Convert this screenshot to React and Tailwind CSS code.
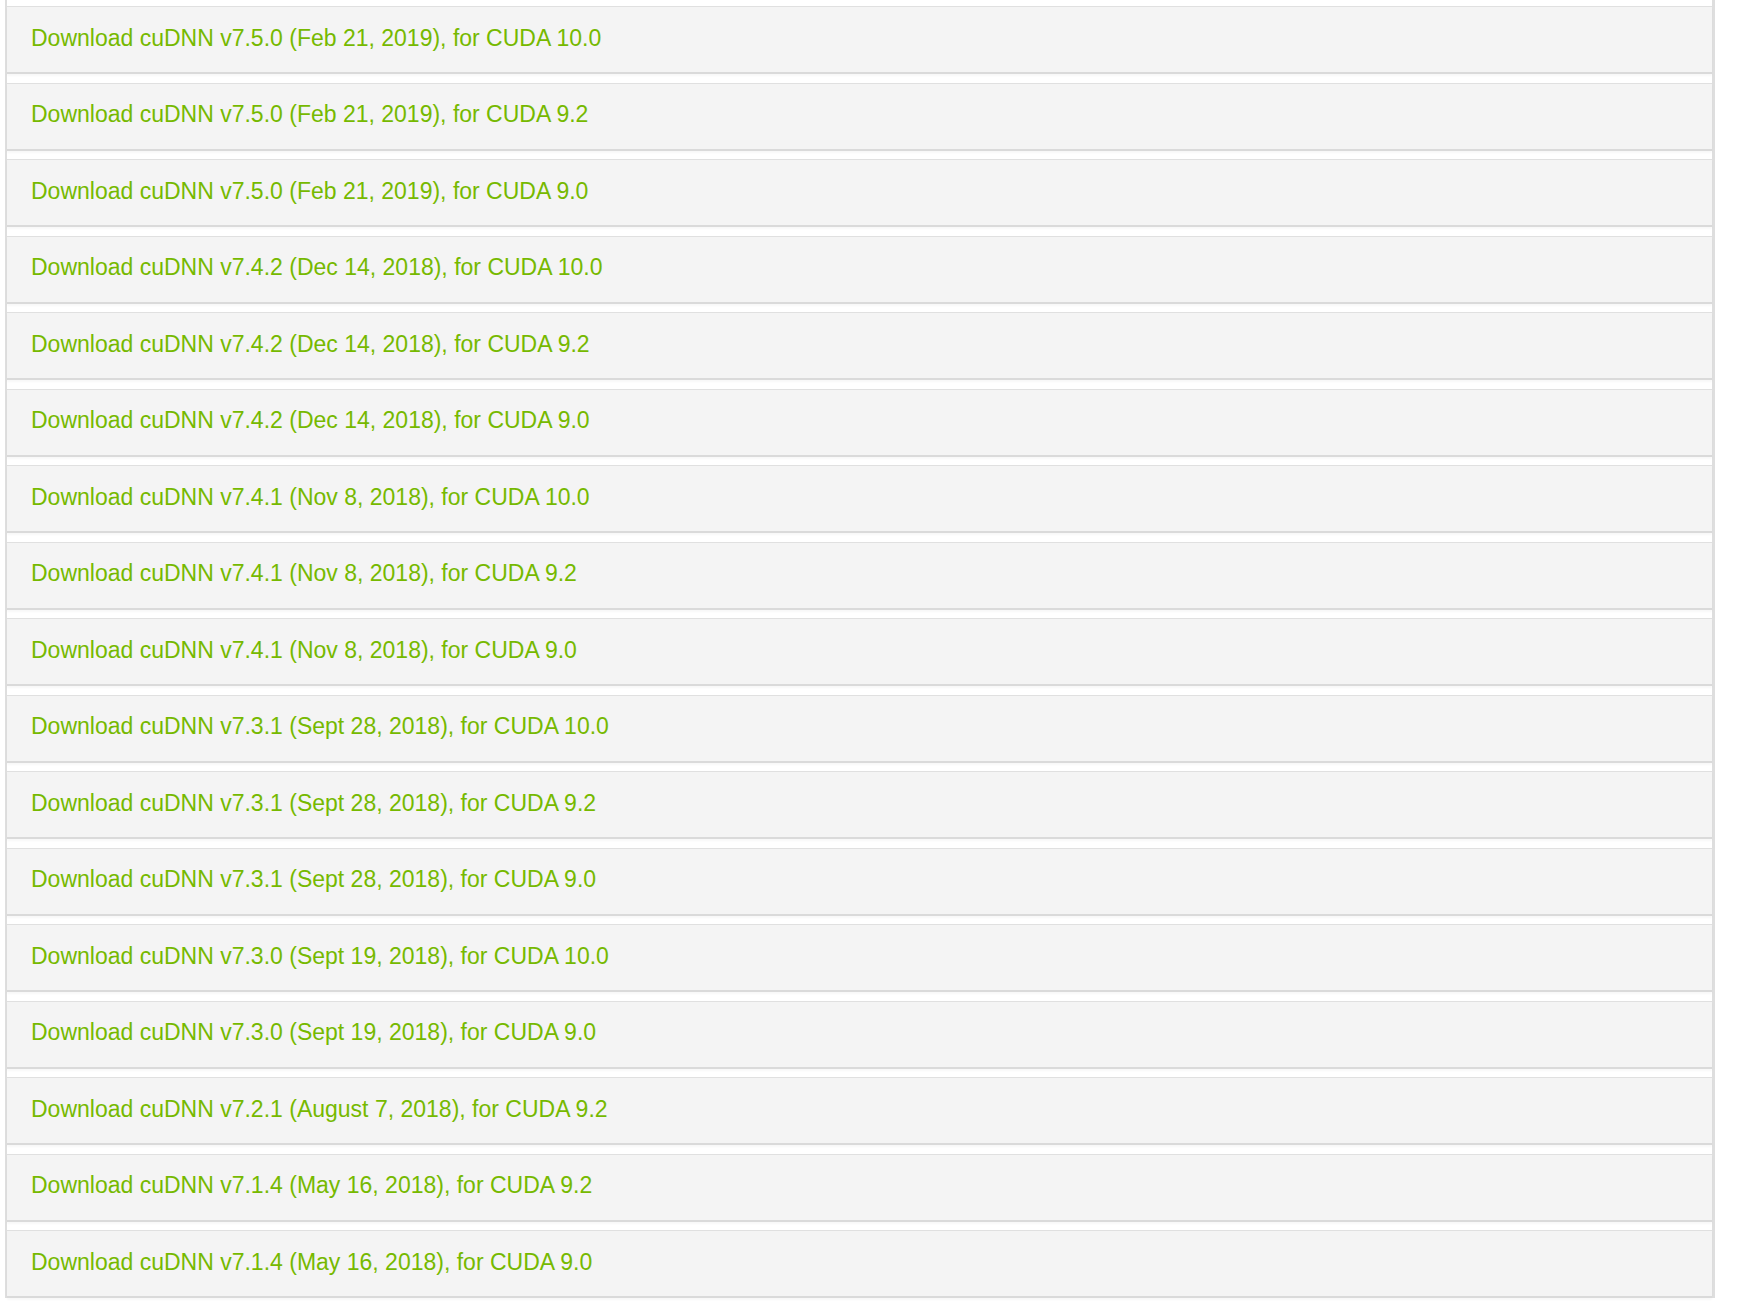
import React from 'react';

const rows = [
  'Download cuDNN v7.5.0 (Feb 21, 2019), for CUDA 10.0',
  'Download cuDNN v7.5.0 (Feb 21, 2019), for CUDA 9.2',
  'Download cuDNN v7.5.0 (Feb 21, 2019), for CUDA 9.0',
  'Download cuDNN v7.4.2 (Dec 14, 2018), for CUDA 10.0',
  'Download cuDNN v7.4.2 (Dec 14, 2018), for CUDA 9.2',
  'Download cuDNN v7.4.2 (Dec 14, 2018), for CUDA 9.0',
  'Download cuDNN v7.4.1 (Nov 8, 2018), for CUDA 10.0',
  'Download cuDNN v7.4.1 (Nov 8, 2018), for CUDA 9.2',
  'Download cuDNN v7.4.1 (Nov 8, 2018), for CUDA 9.0',
  'Download cuDNN v7.3.1 (Sept 28, 2018), for CUDA 10.0',
  'Download cuDNN v7.3.1 (Sept 28, 2018), for CUDA 9.2',
  'Download cuDNN v7.3.1 (Sept 28, 2018), for CUDA 9.0',
  'Download cuDNN v7.3.0 (Sept 19, 2018), for CUDA 10.0',
  'Download cuDNN v7.3.0 (Sept 19, 2018), for CUDA 9.0',
  'Download cuDNN v7.2.1 (August 7, 2018), for CUDA 9.2',
  'Download cuDNN v7.1.4 (May 16, 2018), for CUDA 9.2',
  'Download cuDNN v7.1.4 (May 16, 2018), for CUDA 9.0',
];

export default function App() {
  return (
    <div className="h-[1303px] overflow-hidden bg-white font-['Liberation_Sans',Arial,sans-serif]">
      <div className="ml-[5px] w-[1710px] border-l-2 border-r-[3px] border-[#dedede] pt-[6px]">
        {rows.map((label) => (
          <div
            key={label}
            className="mb-[8.5px] flex h-[68px] items-center border-t border-b-2 border-t-[#e0e0e0] border-b-[#dadada] bg-[#f4f4f4] pb-[3px] pl-[24px] shadow-[0_2px_2px_rgba(0,0,0,0.03)]"
          >
            <a href="#" className="text-[23px] text-[#76b900]">
              {label}
            </a>
          </div>
        ))}
      </div>
    </div>
  );
}
